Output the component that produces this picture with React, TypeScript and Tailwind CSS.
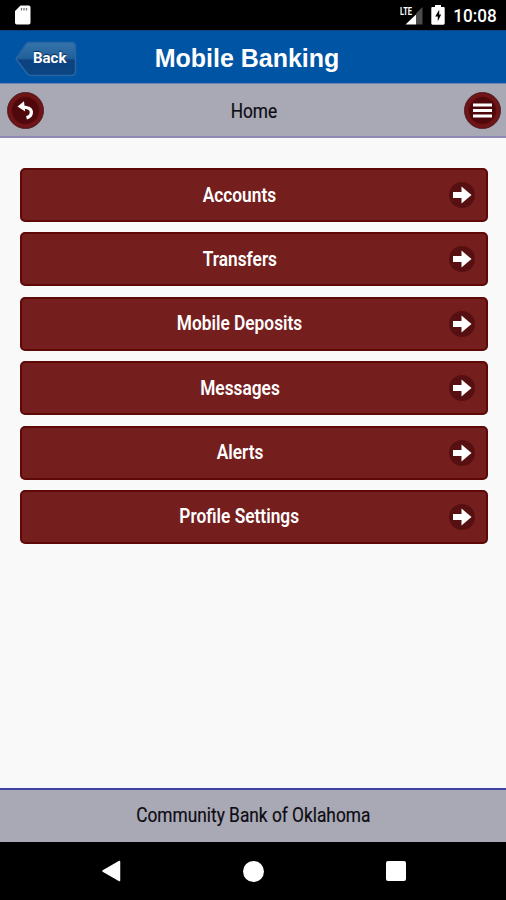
import { ReactNode } from "react";

const menuItems = [
  "Accounts",
  "Transfers",
  "Mobile Deposits",
  "Messages",
  "Alerts",
  "Profile Settings",
];

function StatusBar() {
  return (
    <div className="flex h-[30px] shrink-0 items-center bg-black pl-[15px] pr-[9px] text-white">
      <svg width="16" height="20" viewBox="0 0 16 20">
        <path d="M5.5 .5h8.200a1.800 1.800 0 0 1 1.800 1.800v15.400a1.800 1.800 0 0 1-1.800 1.800H1.800A1.800 1.800 0 0 1 0 17.700V6z" fill="#fff" />
        <path d="M6.500 3v2.500M9 3v2.500M11.500 3v2.500" stroke="#777" strokeWidth="1.300" />
      </svg>

      <div className="ml-auto flex items-center">
        <div className="flex items-start">
          <span className="mr-[-13px] h-5 w-[18px] origin-left scale-x-[.68] text-[11px] font-bold leading-[13px]">
            LTE
          </span>
          <svg width="18" height="20" viewBox="0 0 18 20">
            <path d="M17.500 2v17.500H11V8.500z" fill="#4b4b4b" />
            <path d="M11 9.500v10H.5z" fill="#fff" />
          </svg>
        </div>
        <svg className="ml-[8px]" width="14" height="20" viewBox="0 0 14 20">
          <path d="M4 0h6v2h2.400c.8 0 1.300.5 1.300 1.300v15c0 .8-.5 1.400-1.300 1.400H1.600c-.8 0-1.300-.6-1.300-1.400v-15C.3 2.500.8 2 1.600 2H4z" fill="#fff" />
          <path d="M8.200 4.800 4.200 11.600h2.600v4.600l3.400-6.700H8.200z" fill="#000" />
        </svg>
        <span className="ml-[6px] origin-right scale-x-[.95] pt-[2px] text-[18px] font-medium leading-[30px]">
          10:08
        </span>
      </div>
    </div>
  );
}

function BackButton() {
  return (
    <button className="relative block h-9 w-[62px]">
      <svg className="absolute inset-0" width="62" height="36" viewBox="0 0 62 36">
        <defs>
          <linearGradient id="back" x1="0" y1="0" x2="0" y2="1">
            <stop offset="0" stopColor="#3674ab" />
            <stop offset=".48" stopColor="#215f9a" />
            <stop offset=".54" stopColor="#0b427f" />
            <stop offset="1" stopColor="#0a4582" />
          </linearGradient>
        </defs>
        <path
          d="M14 1.500h43a3.500 3.500 0 0 1 3.500 3.500v26a3.500 3.500 0 0 1-3.500 3.500H16q-2 0-3.500-1.500L1 18 11 3.200Q12 1.500 14 1.500z"
          fill="url(#back)"
          stroke="#2866a3"
          strokeWidth="1.500"
        />
      </svg>
      <span className="absolute left-[18px] top-[7px] text-[15px] font-bold leading-[20px] text-white [text-shadow:0_-1px_1px_#0a2c55]">
        Back
      </span>
    </button>
  );
}

function RoundButton({ children }: { children: ReactNode }) {
  return (
    <button className="flex h-[37px] w-[37px] items-center justify-center rounded-full border border-[#56252c] bg-[#4f080b] shadow-[inset_0_0_1px_4px_#6f1417]">
      {children}
    </button>
  );
}

function MenuButton({ label }: { label: string }) {
  return (
    <button className="flex h-[54px] w-full items-center rounded-[5px] border-2 border-[#5e0808] bg-[#741e1e] pr-[10px] text-white">
      <span className="flex-1 pl-[9px] pt-px text-center">
        <span className="inline-block scale-x-[.865] whitespace-nowrap text-[20px] font-semibold leading-6">
          {label}
        </span>
      </span>
      <svg width="28" height="28" viewBox="0 0 28 28">
        <circle cx="14" cy="14" r="13" fill="#571012" />
        <path d="M5 11h8.500V5.500L23.500 14 13.500 22.500V17H5z" fill="#fff" />
      </svg>
    </button>
  );
}

export default function App() {
  return (
    <div className="flex h-[900px] w-[506px] flex-col bg-[#f9f9f9] font-[Roboto,sans-serif]">
      <StatusBar />

      <header className="grid h-[54px] shrink-0 grid-cols-[1fr_auto_1fr] items-center border-b border-[#6f83b6] border-t border-t-[#0a4381] bg-[#0054a4]">
        <div className="pl-[15px] pt-[3px]">
          <BackButton />
        </div>
        <h1 className="pr-[12px] pt-[4px] font-['Liberation_Sans',sans-serif] text-[25px] font-bold text-white">
          Mobile Banking
        </h1>
      </header>

      <div className="flex h-[54px] shrink-0 items-center justify-between border-b-2 border-[#8f89b4] bg-[#a9a8b5] pl-[7px] pr-[5px]">
        <RoundButton>
          <svg width="21" height="21" viewBox="0 0 21 21">
            <path d="M6 7.200c7-.6 11 2 10.300 6-.4 2.400-2.300 4-4.800 4.700" fill="none" stroke="#fff" strokeWidth="3.200" />
            <path d="M2.500 6.500 9 1.200 10.200 11.500z" fill="#fff" />
          </svg>
        </RoundButton>
        <h2 className="scale-x-[.865] pt-px text-[20px] text-[#0c0c12] [-webkit-text-stroke:.2px_#0c0c12]">
          Home
        </h2>
        <RoundButton>
          <svg width="19" height="15" viewBox="0 0 19 15">
            <path d="M0 2h19M0 7.500h19M0 13h19" stroke="#fff" strokeWidth="3" />
          </svg>
        </RoundButton>
      </div>

      <main className="flex flex-1 flex-col gap-[10.400px] pl-[20px] pr-[18px] pt-[30px]">
        {menuItems.map((label) => (
          <MenuButton key={label} label={label} />
        ))}
      </main>

      <footer className="flex h-[54px] shrink-0 items-center justify-center border-t-2 border-[#4043a4] bg-[#a9a8b5] pb-[2px]">
        <p className="scale-x-[.865] whitespace-nowrap pl-px text-[20px] text-[#0c0c12] [-webkit-text-stroke:.2px_#0c0c12]">
          Community Bank of Oklahoma
        </p>
      </footer>

      <nav className="flex h-[58px] shrink-0 items-center justify-between bg-black pl-[101px] pr-[100px]">
        <svg width="20" height="22" viewBox="0 0 20 22">
          <path d="M18.500 1.500v19L2 11z" fill="#fff" stroke="#fff" strokeWidth="1.500" strokeLinejoin="round" />
        </svg>
        <span className="h-[21px] w-[21px] rounded-full bg-white" />
        <span className="h-5 w-5 rounded-[2px] bg-white" />
      </nav>
    </div>
  );
}
